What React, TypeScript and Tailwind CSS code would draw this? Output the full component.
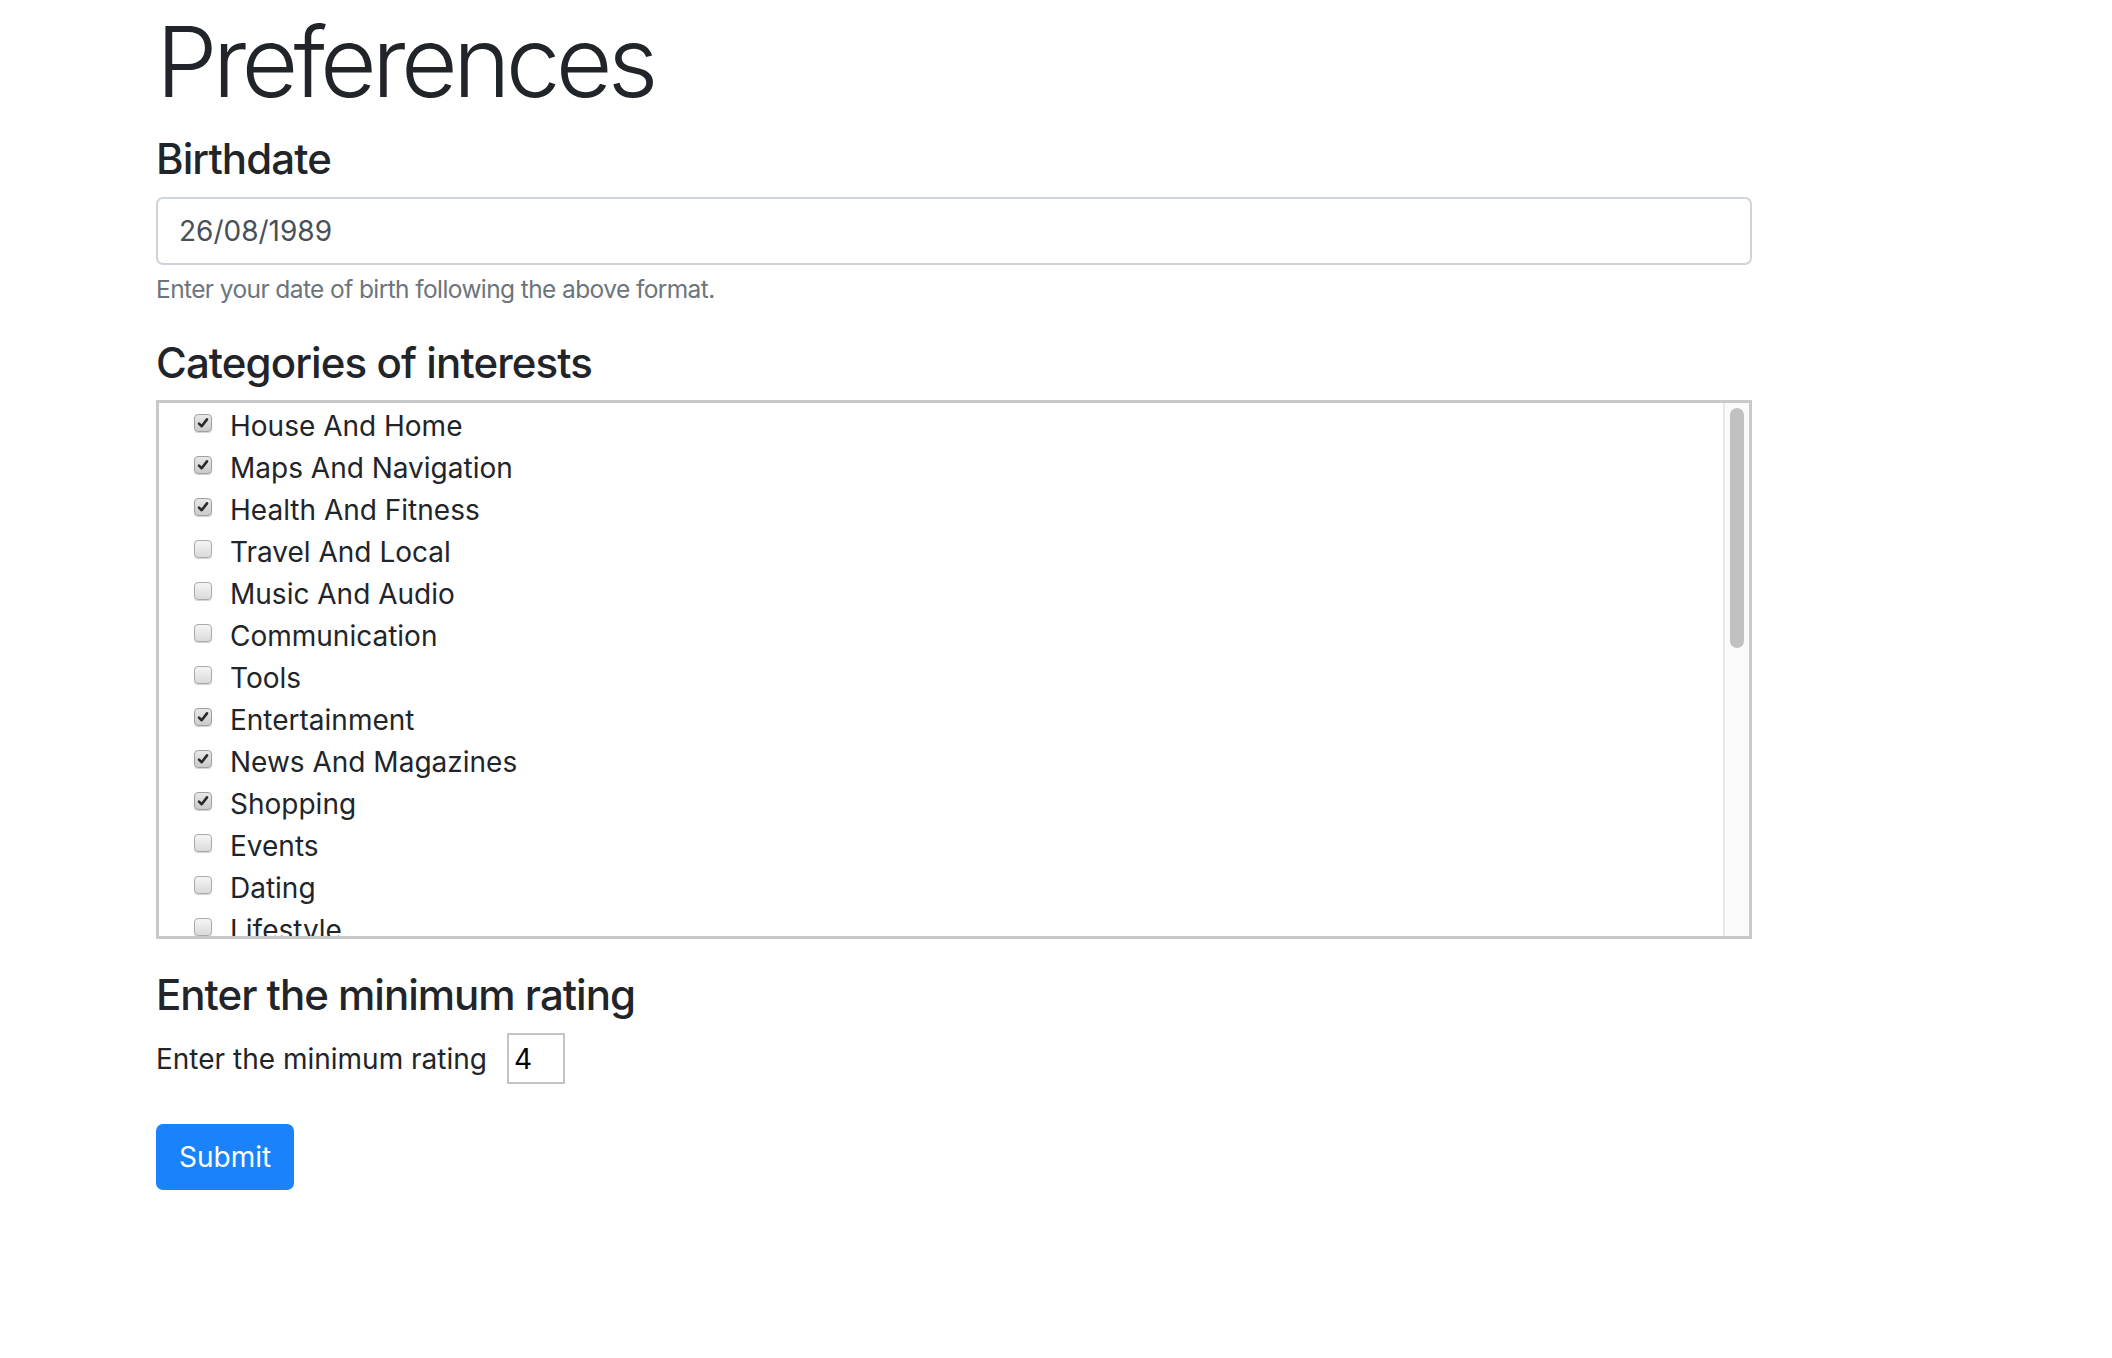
import { useState } from 'react';

type Category = { name: string; checked: boolean };

const initialCategories: Category[] = [
  { name: 'House And Home', checked: true },
  { name: 'Maps And Navigation', checked: true },
  { name: 'Health And Fitness', checked: true },
  { name: 'Travel And Local', checked: false },
  { name: 'Music And Audio', checked: false },
  { name: 'Communication', checked: false },
  { name: 'Tools', checked: false },
  { name: 'Entertainment', checked: true },
  { name: 'News And Magazines', checked: true },
  { name: 'Shopping', checked: true },
  { name: 'Events', checked: false },
  { name: 'Dating', checked: false },
  { name: 'Lifestyle', checked: false },
];

function Checkbox({ checked }: { checked: boolean }) {
  return (
    <span
      className={
        checked
          ? 'flex h-[18px] w-[18px] shrink-0 items-center justify-center rounded-[4px] border border-[#a0a0a0] bg-gradient-to-b from-[#e8e8e8] to-[#cbcbcb] shadow-[0_1px_1px_rgba(0,0,0,0.18)]'
          : 'flex h-[18px] w-[18px] shrink-0 items-center justify-center rounded-[4px] border border-[#aaaaaa] bg-gradient-to-b from-[#f5f5f5] to-[#dadada] shadow-[0_1px_1px_rgba(0,0,0,0.18)]'
      }
    >
      {checked && (
        <svg width="12" height="12" viewBox="0 0 12 12">
          <path d="M2 6.6 L4.7 9.2 L10 2.4" fill="none" stroke="#2b2b2b" strokeWidth="2.6" strokeLinecap="round" strokeLinejoin="round" />
        </svg>
      )}
    </span>
  );
}

export default function App() {
  const [categories, setCategories] = useState<Category[]>(initialCategories);
  const [birthdate, setBirthdate] = useState('26/08/1989');
  const [rating, setRating] = useState('4');

  const toggle = (name: string) => {
    setCategories((prev) => prev.map((c) => (c.name === name ? { ...c, checked: !c.checked } : c)));
  };

  return (
    <div className="min-h-screen bg-white pl-[156px] text-[#212529] [font-family:Inter,'Noto_Sans',sans-serif]">
      <div className="w-[1596px]">
        {/* Title */}
        <h1 className="pt-[3px] text-[98px] font-light leading-[118px] tracking-[-4.8px]">Preferences</h1>

        {/* Birthdate */}
        <h4 className="mt-[13px] text-[42px] font-medium leading-[50px] tracking-[-0.9px]">Birthdate</h4>
        <input
          value={birthdate}
          onChange={(e) => setBirthdate(e.target.value)}
          className="mt-[13px] block h-[68px] w-full rounded-[7px] border-2 border-[#ced4da] px-[21px] text-[28px] text-[#495057] outline-none"
        />
        <p className="mt-[6px] text-[24.5px] leading-[37px] tracking-[-0.6px] text-[#6c757d]">
          Enter your date of birth following the above format.
        </p>

        {/* Categories */}
        <h4 className="mt-[30px] text-[42px] font-medium leading-[50px] tracking-[-0.9px]">Categories of interests</h4>
        <div className="mt-[12px] flex h-[539px] border-[3px] border-[#c9c9c9] bg-white">
          <div className="flex-1 overflow-hidden pt-[2px]">
            {categories.map((c) => (
              <label
                key={c.name}
                onClick={() => toggle(c.name)}
                className="flex h-[42px] cursor-pointer items-center pl-[35px] text-[28px] leading-[42px]"
              >
                <span className="-mt-[7px]">
                  <Checkbox checked={c.checked} />
                </span>
                <span className="ml-[18px]">{c.name}</span>
              </label>
            ))}
          </div>
          <div className="flex w-[26px] justify-center border-l-2 border-[#e8e8e8] bg-[#fafafa] pt-[5px]">
            <div className="h-[240px] w-[14px] rounded-full bg-[#c1c1c1]" />
          </div>
        </div>

        {/* Minimum rating */}
        <h4 className="mt-[31px] text-[42px] font-medium leading-[50px] tracking-[-1px]">Enter the minimum rating</h4>
        <div className="mt-[13px] flex items-center">
          <span className="text-[28px] leading-[42px]">Enter the minimum rating</span>
          <input
            value={rating}
            onChange={(e) => setRating(e.target.value)}
            className="ml-[20px] h-[51px] w-[58px] border-2 border-[#c4c4c4] px-[5px] text-[28px] text-black outline-none"
          />
        </div>

        <button className="mt-[40px] h-[66px] rounded-[7px] bg-[#1a82fb] px-[23px] text-[28px] text-white">Submit</button>
      </div>
    </div>
  );
}
